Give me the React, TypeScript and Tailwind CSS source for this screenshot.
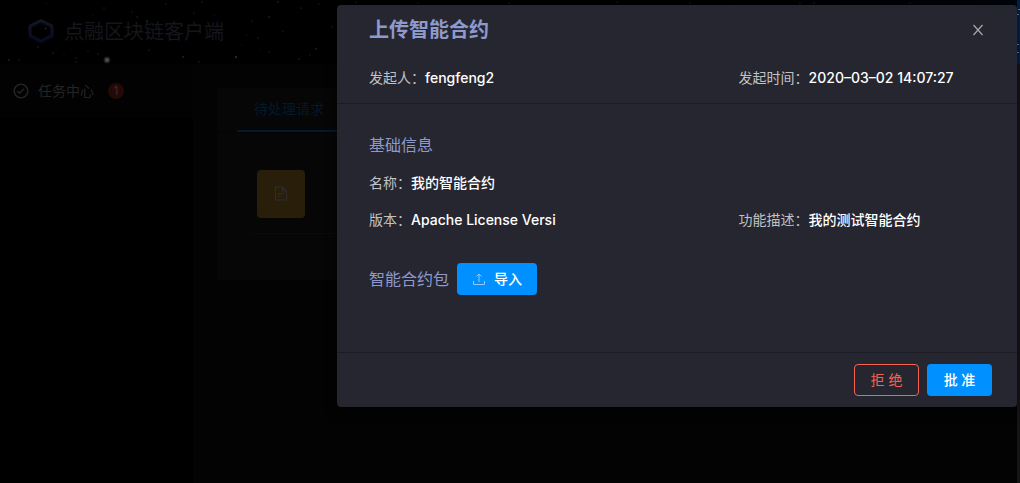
import { BiCheckCircle } from "react-icons/bi";

const STARS = [
    [46, 3, 0.4], [104, 8, 0.6], [93, 15, 0.4], [132, 12, 0.5], [137, 17, 0.6], [147, 21, 0.8], [166, 4, 0.5],
    [194, 13, 0.5], [202, 2, 0.6], [214, 15, 0.4], [252, 21, 0.5], [269, 17, 0.7], [278, 2, 0.7], [301, 8, 0.6],
    [319, 4, 0.5], [332, 27, 0.6], [283, 31, 0.5], [258, 38, 0.5], [242, 45, 0.4], [236, 57, 0.9], [247, 35, 0.4],
    [183, 57, 0.8], [199, 62, 0.6], [149, 50, 0.6], [125, 37, 0.6], [117, 31, 0.4], [98, 54, 0.6], [88, 51, 0.5],
    [76, 58, 0.6], [76, 62, 0.6], [53, 53, 0.6], [38, 47, 0.6], [9, 60, 0.7], [19, 60, 0.6], [64, 55, 0.4],
    [269, 52, 0.5], [316, 49, 0.7], [299, 59, 0.6], [310, 55, 0.5], [175, 26, 0.4], [222, 29, 0.5], [260, 48, 0.4],
    [356, 2, 0.5], [418, 3, 0.5], [509, 3, 0.6], [617, 2, 0.5], [690, 3, 0.6], [800, 3, 0.6], [814, 3, 0.6], [910, 3, 0.5],
];

function Starfield() {
    return (
        <svg className="absolute inset-0 h-full w-full" aria-hidden="true">
            {STARS.map(([x, y, r]) => (
                <circle key={`${x}-${y}`} cx={x} cy={y} r={r} fill="#363d42" />
            ))}
            <circle cx="107" cy="60" r="3.5" fill="#1a1d1c" />
            <circle cx="107" cy="60" r="2" fill="#4a4e4d" />
        </svg>
    );
}

function Logo() {
    return (
        <svg className="relative" width="26" height="28" viewBox="0 0 26 28" fill="none" aria-hidden="true">
            <defs>
                <linearGradient id="hex" x1="0" y1="0" x2="0" y2="1">
                    <stop offset="0" stopColor="#14161f" />
                    <stop offset="1" stopColor="#070b24" />
                </linearGradient>
            </defs>
            <path d="M13 5 24 10v9L13 25 2 19v-9z" stroke="#02040f" strokeWidth="3" strokeLinejoin="round" />
            <path d="M13 2.500 24 8v9.500L13 23 2 17.500V8z" stroke="url(#hex)" strokeWidth="3" strokeLinejoin="round" />
            <circle cx="17.500" cy="10.500" r="0.8" fill="#2c3245" />
        </svg>
    );
}

function Field({ label, value }: { label: string; value: string }) {
    return (
        <div className="flex leading-5">
            <dt className="text-[#c2c2c3]">{label}：</dt>
            <dd className="font-[450] text-white">{value}</dd>
        </div>
    );
}

function ContractDialog() {
    return (
        <section
            role="dialog"
            aria-labelledby="dialog-title"
            className="w-[680px] max-w-full rounded-sm bg-[#262630] shadow-[0_4px_12px_rgba(0,0,0,0.5)]"
        >
            <header className="border-b border-[#1b1b23] px-8 pt-[11px] pb-[15px]">
                <div className="flex items-center justify-between">
                    <h2 id="dialog-title" className="text-xl leading-7 font-bold text-[#8e99cc]">上传智能合约</h2>
                    <button type="button" aria-label="关闭" className="text-[#a8a8ac]">
                        <svg width="14" height="14" viewBox="0 0 14 14" fill="none" stroke="currentColor" strokeWidth="1.200">
                            <path d="M2.500 2 11.500 12M11.500 2 2.500 12" />
                        </svg>
                    </button>
                </div>
                <dl className="mt-6 grid grid-cols-[3fr_2fr]">
                    <Field label="发起人" value="fengfeng2" />
                    <Field label="发起时间" value="2020–03–02 14:07:27" />
                </dl>
            </header>

            <div className="px-8 pt-[27px] pb-[57px]">
                <h3 className="text-base leading-7 text-[#8e99cc]">基础信息</h3>
                <dl className="mt-[14px] grid grid-cols-[3fr_2fr] gap-y-[17px]">
                    <div className="col-span-2">
                        <Field label="名称" value="我的智能合约" />
                    </div>
                    <Field label="版本" value="Apache License Versi" />
                    <Field label="功能描述" value="我的测试智能合约" />
                </dl>
                <div className="mt-[33px] flex items-center gap-2">
                    <h3 className="text-base text-[#8e99cc]">智能合约包</h3>
                    <button type="button" className="flex h-8 w-20 items-center justify-center gap-2 rounded bg-[#0090ff] font-medium text-white">
                        <svg width="14" height="14" viewBox="0 0 14 14" fill="none" stroke="#8fcaff" strokeWidth="1">
                            <path d="M1.500 9v3.500h11V9M7 10V2.500M4.500 4.500 7 2l2.500 2.500" />
                        </svg>
                        导入
                    </button>
                </div>
            </div>

            <footer className="flex justify-end gap-2 border-t border-[#1b1b23] px-[25px] py-[11px]">
                <button type="button" className="h-8 w-[65px] rounded border border-[#f9604f] text-[#f9604f]">拒 绝</button>
                <button type="button" className="h-8 w-[65px] rounded bg-[#0090ff] font-medium text-white">批 准</button>
            </footer>
        </section>
    );
}

export default function App() {
    return (
        <div className="relative flex min-h-screen flex-col overflow-hidden bg-black font-[Inter,'Noto_Sans_CJK_SC',sans-serif] text-sm">
            <header className="relative flex h-16 items-center gap-2.5 bg-linear-to-r from-black from-20% to-[#01040c] px-7">
                <Starfield />
                <Logo />
                <h1 className="relative text-xl leading-6 text-[#15161c]">点融区块链客户端</h1>
            </header>

            <div className="flex flex-1">
                <nav className="w-[193px] shrink-0">
                    <a href="#tasks" className="flex h-[54px] items-center bg-[#020202] px-3 text-[#242424]">
                        <BiCheckCircle className="mr-2 size-[18px]" />
                        任务中心
                        <span className="ml-3.5 flex size-4 items-center justify-center rounded-full bg-[#260907] text-xs text-[#3a2a29]">1</span>
                    </a>
                </nav>

                <main className="flex-1 bg-[#030303] p-6 pr-0">
                    <div className="h-48 bg-[#060606]">
                        <div role="tablist" className="flex border-b border-[#030303] px-5">
                            <button type="button" role="tab" aria-selected="true" className="h-11 w-28 border-b-2 border-[#001a2e] pr-2 text-[#001a2e]">
                                待处理请求
                            </button>
                        </div>
                        <div className="ml-8 border-b border-[#0a0a0a] px-2 pt-[37px] pb-[15px]">
                            <div className="flex size-12 items-center justify-center rounded bg-[#281e0a]">
                                <svg width="14" height="16" viewBox="0 0 14 16" fill="none" stroke="#2e2d2b" strokeWidth="1.200" aria-hidden="true">
                                    <path d="M1.500 1h7l4 4v9h-11zM8.500 1v4h4M4 7.500h6M4 10h3" />
                                </svg>
                            </div>
                        </div>
                    </div>
                </main>
            </div>

            {/* Page edge that the mask leaves uncovered */}
            <div className="absolute inset-y-0 right-0 flex w-[3px] flex-col bg-[#171416]">
                <div className="h-16 bg-[#02224c]">
                    <svg width="3" height="64" aria-hidden="true">
                        <path d="M1 9.500h2M0 14.500h2M0 44.500h2M0 52.500h2" stroke="#5d7f9f" />
                    </svg>
                </div>
            </div>

            <div className="absolute inset-0 flex items-start justify-end pt-[5px] pr-[3px]">
                <ContractDialog />
            </div>
        </div>
    );
}
